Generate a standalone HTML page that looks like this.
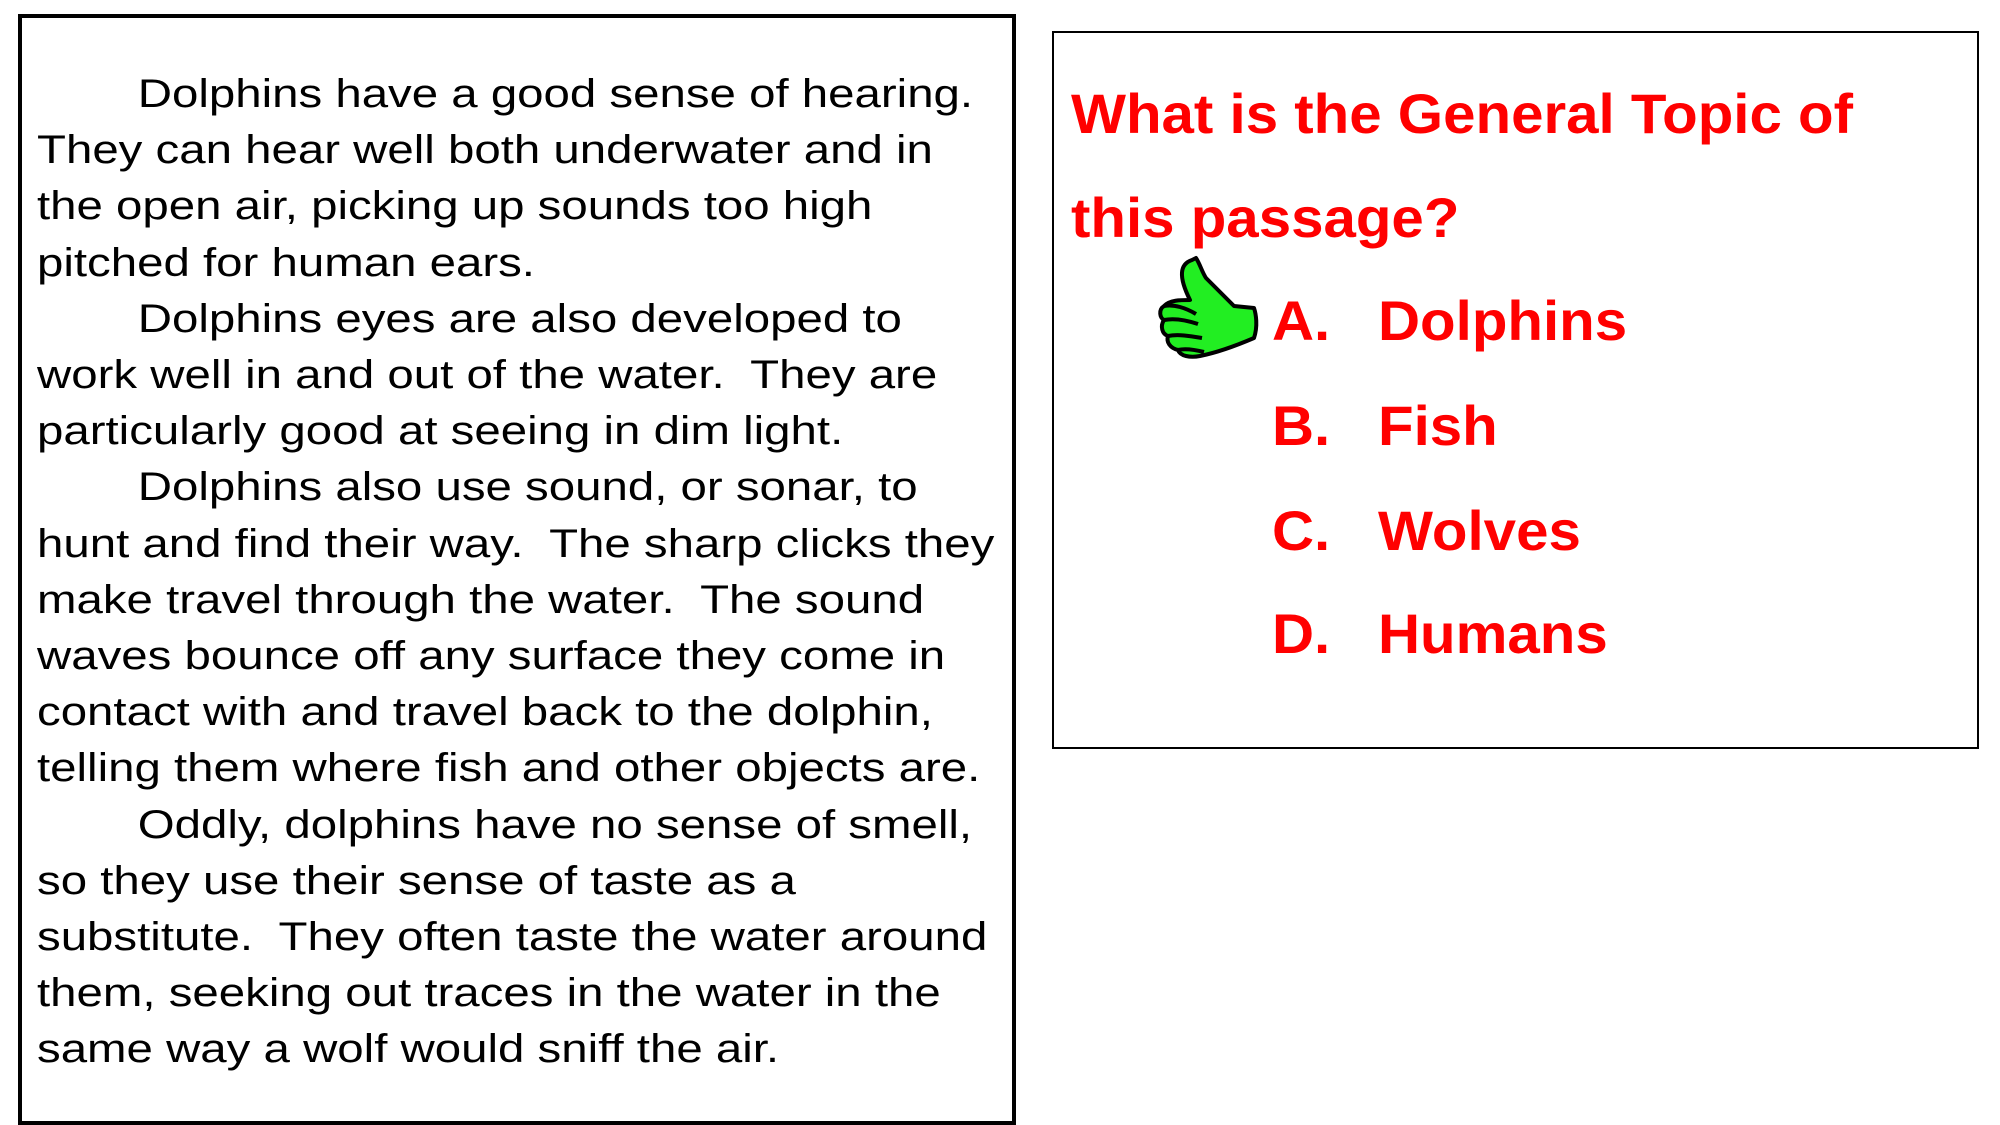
<!DOCTYPE html>
<html style="overflow:hidden;height:1125px"><head><style>
body{margin:0;width:2000px;height:1125px;background:#fff;position:relative;overflow:hidden;font-family:"Liberation Sans",Arial,sans-serif}
#lb{position:absolute;left:18px;top:14px;width:998px;height:1111px;border:4px solid #000;box-sizing:border-box}
#rb{position:absolute;left:1052px;top:31px;width:927px;height:718px;border:2px solid #000;box-sizing:border-box}
#p{position:absolute;left:37px;top:66px;font-size:40px;line-height:56.2px;color:#000;white-space:pre;transform:scaleX(1.185);transform-origin:0 0}
#p i{display:inline-block;width:85px}
.q{position:absolute;color:#f00;font-weight:bold;font-size:56px;line-height:56px;white-space:pre;transform:scaleX(1.04);transform-origin:0 0}
</style></head><body>
<div id="lb"></div><div id="rb"></div>
<div id="p"><i></i>Dolphins have a good sense of hearing.
They can hear well both underwater and in
the open air, picking up sounds too high
pitched for human ears.
<i></i>Dolphins eyes are also developed to
work well in and out of the water.  They are
particularly good at seeing in dim light.
<i></i>Dolphins also use sound, or sonar, to
hunt and find their way.  The sharp clicks they
make travel through the water.  The sound
waves bounce off any surface they come in
contact with and travel back to the dolphin,
telling them where fish and other objects are.
<i></i>Oddly, dolphins have no sense of smell,
so they use their sense of taste as a
substitute.  They often taste the water around
them, seeking out traces in the water in the
same way a wolf would sniff the air.</div>
<div class="q" style="left:1071px;top:86px">What is the General Topic of</div>
<div class="q" style="left:1071px;top:190px">this passage?</div>
<div class="q" style="left:1272px;top:293px">A.</div><div class="q" style="left:1378px;top:293px">Dolphins</div>
<div class="q" style="left:1272px;top:398px">B.</div><div class="q" style="left:1378px;top:398px">Fish</div>
<div class="q" style="left:1272px;top:503px">C.</div><div class="q" style="left:1378px;top:503px">Wolves</div>
<div class="q" style="left:1272px;top:606px">D.</div><div class="q" style="left:1378px;top:606px">Humans</div>
<svg style="position:absolute;left:1150px;top:252px" width="112" height="112" viewBox="0 0 112 112">
<g stroke="#000" stroke-width="4" fill="#22ee22" stroke-linejoin="round">
<path d="M42 8 C30 12 28 24 40 48 C30 48 20 48 14 54 C8 58 10 66 14 68 C10 74 12 82 18 84 C16 90 20 96 28 98 C30 104 40 106 50 104 C70 100 90 92 104 86 C108 74 106 62 104 56 L84 54 C72 42 62 32 56 26 C52 20 50 12 46 6 Z"/>
<path d="M14 68 C24 66 36 68 48 72 M18 84 C28 82 40 84 52 86 M28 98 C36 96 46 98 54 100 M14 54 C24 52 36 56 46 62" fill="none"/>
</g></svg>
</body></html>
